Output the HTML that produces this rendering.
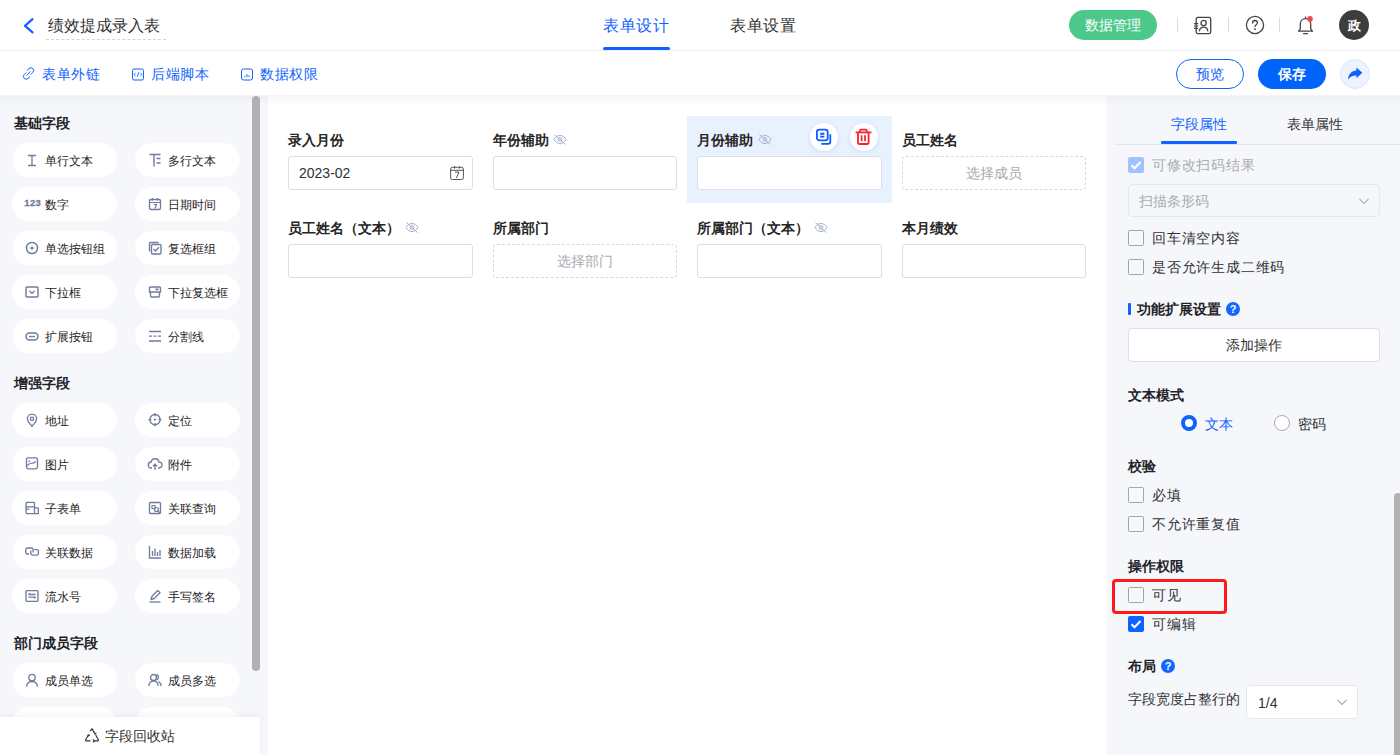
<!DOCTYPE html>
<html><head><meta charset="utf-8">
<style>
*{box-sizing:border-box;margin:0;padding:0}
html,body{width:1400px;height:755px;overflow:hidden;background:#fff;font-family:"Liberation Sans",sans-serif;color:#1f2329}
.abs{position:absolute}
#hdr{position:absolute;left:0;top:0;width:1400px;height:51px;border-bottom:1px solid #eceef2;background:#fff}
#tb{position:absolute;left:0;top:51px;width:1400px;height:45px;background:#fff}
#left{position:absolute;left:0;top:96px;width:268px;height:659px;background:#f5f7fb}
#canvas{position:absolute;left:268px;top:96px;width:838px;height:659px;background:#fff}
#right{position:absolute;left:1106px;top:96px;width:294px;height:659px;background:#f5f7fb}
.shadow{position:absolute;left:0;top:95px;width:1400px;height:10px;background:linear-gradient(to bottom,rgba(0,0,0,0.035),rgba(0,0,0,0))}
.t{position:absolute;white-space:nowrap;line-height:1}
.sec{font-size:14px;font-weight:bold;color:#1f2329}
.pill{position:absolute;width:105px;height:34px;border-radius:17px;background:#fff}
.pill .ic{position:absolute;left:13px;top:10px;width:14px;height:14px;overflow:visible}
.pill span{position:absolute;left:33px;top:12px;font-size:12px;line-height:12px;color:#1f2329;white-space:nowrap}
.lbl{position:absolute;font-size:14px;font-weight:bold;color:#262626;line-height:14px;white-space:nowrap}
.inp{position:absolute;width:185px;height:34px;border:1px solid #dedede;border-radius:3px;background:#fff}
.dash{position:absolute;width:185px;height:34px;border:1px dashed #d9d9d9;border-radius:4px;background:#fff;color:#a8abb2;font-size:14px;text-align:center;line-height:32px}
.cb{position:absolute;width:16px;height:16px;border:1px solid #9fa5b8;border-radius:1.5px;background:#f7f8fb}
.cbt{position:absolute;font-size:14px;line-height:14px;color:#1f2329;white-space:nowrap}
</style></head><body>
<div id="hdr">
<svg class="abs" style="left:22px;top:17px" width="13" height="17" viewBox="0 0 13 17"><path d="M10.5 2.2 L3 8.8 L10.5 15.4" fill="none" stroke="#0f62fe" stroke-width="2.2" stroke-linecap="round" stroke-linejoin="round"/></svg>
<div class="t" style="left:48px;top:18px;font-size:16px;color:#333">绩效提成录入表</div>
<div class="abs" style="left:46px;top:39px;width:120px;border-top:1px dashed #d4d4d4"></div>
<div class="t" style="left:603px;top:18px;font-size:16px;color:#0f62fe;letter-spacing:0.7px">表单设计</div>
<div class="abs" style="left:603px;top:47px;width:67px;height:3px;border-radius:1.5px;background:#0f62fe"></div>
<div class="t" style="left:730px;top:18px;font-size:16px;color:#333;letter-spacing:0.7px">表单设置</div>
<div class="abs" style="left:1069px;top:10px;width:88px;height:30px;border-radius:15px;background:#4cc88a;color:#fff;font-size:14px;line-height:30px;text-align:center">数据管理</div>
<div class="abs" style="left:1177px;top:17px;width:1px;height:15px;background:#dcdcdc"></div>
<div class="abs" style="left:1228px;top:17px;width:1px;height:15px;background:#dcdcdc"></div>
<div class="abs" style="left:1279px;top:17px;width:1px;height:15px;background:#dcdcdc"></div>
<svg class="abs" style="left:1193px;top:16px" width="20" height="20" viewBox="0 0 20 20"><rect x="3.2" y="1.3" width="14.5" height="16.3" rx="1.6" fill="none" stroke="#444" stroke-width="1.3"/><path d="M1 7.6h4.2M1 10h4.2M1 12.4h4.2" stroke="#444" stroke-width="1.1"/><circle cx="10.6" cy="7" r="2.6" fill="none" stroke="#444" stroke-width="1.3"/><path d="M6.3 15.3c.4-2.7 2.1-4.1 4.3-4.1s3.9 1.4 4.3 4.1" fill="none" stroke="#444" stroke-width="1.3"/></svg>
<svg class="abs" style="left:1245px;top:15px" width="20" height="20" viewBox="0 0 20 20"><circle cx="10" cy="10" r="8.6" fill="none" stroke="#444" stroke-width="1.3"/><path d="M7.6 8c0-1.5 1.1-2.5 2.4-2.5s2.4.9 2.4 2.3c0 1.8-2.4 1.9-2.4 3.7" fill="none" stroke="#444" stroke-width="1.3" stroke-linecap="round"/><circle cx="10" cy="14.2" r=".9" fill="#444"/></svg>
<svg class="abs" style="left:1296px;top:14px" width="20" height="22" viewBox="0 0 20 22"><path d="M2.6 17.2h13.8l-1.7-2.3V9.8c0-2.9-2.2-5.2-5.2-5.2S4.3 6.9 4.3 9.8v5.1z" fill="none" stroke="#444" stroke-width="1.3" stroke-linejoin="round"/><path d="M7.6 19.6h3.8" stroke="#444" stroke-width="1.4" stroke-linecap="round"/><path d="M9.5 2.5v2" stroke="#444" stroke-width="1.2"/><circle cx="14" cy="4.9" r="2.8" fill="#f04848"/></svg>
<div class="abs" style="left:1339px;top:10px;width:30px;height:30px;border-radius:15px;background:#3d3d3d;color:#fff;font-size:13px;line-height:31px;text-align:center;font-weight:bold">政</div>
</div>
<div id="tb">
<svg class="abs" style="left:22px;top:16px" width="13" height="13" viewBox="0 0 13 13"><path d="M5.2 3.2 L7 1.6 a2.6 2.6 0 0 1 3.8 3.8 L9 7.2" fill="none" stroke="#0f62fe" stroke-width="1" stroke-linecap="round"/><path d="M7.8 9.8 L6 11.4 a2.6 2.6 0 0 1 -3.8 -3.8 L4 5.8" fill="none" stroke="#0f62fe" stroke-width="1" stroke-linecap="round"/><path d="M4.8 8.2 L8.2 4.8" stroke="#0f62fe" stroke-width="1" stroke-linecap="round"/></svg>
<div class="t" style="left:42px;top:16px;font-size:14px;color:#0f62fe;letter-spacing:0.5px">表单外链</div>
<svg class="abs" style="left:131px;top:17px" width="13" height="13" viewBox="0 0 13 13"><rect x="1.5" y="1" width="11" height="11" rx="1.5" fill="none" stroke="#0f62fe" stroke-width="1"/><path d="M4.6 4.8L3.2 6.5L4.6 8.2M9.4 4.8L10.8 6.5L9.4 8.2M7.8 4.2L6.2 8.8" fill="none" stroke="#0f62fe" stroke-width="0.9"/></svg>
<div class="t" style="left:151px;top:16px;font-size:14px;color:#0f62fe;letter-spacing:0.5px">后端脚本</div>
<svg class="abs" style="left:240px;top:17px" width="14" height="13" viewBox="0 0 14 13"><rect x="1.5" y="1" width="11" height="11" rx="2" fill="none" stroke="#0f62fe" stroke-width="1"/><path d="M4.9 9.3V7.6M7 9.3V6M9.1 9.3V7.2" stroke="#0f62fe" stroke-width="0.9"/></svg>
<div class="t" style="left:260px;top:16px;font-size:14px;color:#0f62fe;letter-spacing:0.5px">数据权限</div>
<div class="abs" style="left:1176px;top:8px;width:68px;height:30px;border:1px solid #0f62fe;border-radius:15px;color:#0f62fe;font-size:14px;line-height:28px;text-align:center">预览</div>
<div class="abs" style="left:1258px;top:8px;width:68px;height:30px;border-radius:15px;background:#0064fa;color:#fff;font-size:14px;font-weight:bold;line-height:30px;text-align:center">保存</div>
<div class="abs" style="left:1340px;top:8px;width:30px;height:30px;border-radius:15px;background:#eef4ff;border:1px solid #dbe6fb"></div>
<svg class="abs" style="left:1347px;top:15px" width="16" height="15" viewBox="0 0 16 15"><path d="M9.4 4.4C4.6 4.8 1.3 8 1 13.8C3 10.6 5.5 9.4 9.4 9.4V12.2L15.4 6.8L9.4 1.4Z" fill="#0f62fe"/></svg>
</div>
<div id="left">
<div class="t sec" style="left:14px;top:20px">基础字段</div>
<div class="pill" style="left:12px;top:47px"><svg class="ic" width="14" height="14" viewBox="0 0 14 14"><path d="M3 2.5h8M3 12.5h8M7 2.5v10" stroke="#6f7c9c" stroke-width="1.29" fill="none"/></svg><span>单行文本</span></div>
<div class="pill" style="left:135px;top:47px"><svg class="ic" width="14" height="14" viewBox="0 0 14 14"><path d="M1.5 1.5h11M6 1.5v12M8.5 5.5h4M8.5 10h4" stroke="#6f7c9c" stroke-width="1.46" fill="none"/></svg><span>多行文本</span></div>
<div class="pill" style="left:12px;top:91px"><svg class="ic" width="14" height="14" viewBox="0 0 14 14"><text x="-0.8" y="9.4" style="font:bold 9.5px 'Liberation Sans',sans-serif;letter-spacing:0.4px" fill="#6f7c9c" stroke="#6f7c9c" stroke-width="0.28">123</text></svg><span>数字</span></div>
<div class="pill" style="left:135px;top:91px"><svg class="ic" width="14" height="14" viewBox="0 0 14 14"><rect x="1.5" y="2.5" width="11" height="10" rx="1.5" fill="none" stroke="#6f7c9c" stroke-width="1.34"/><path d="M1.5 5.5h11M4.5 1v2.5M9.5 1v2.5M5.5 7.5h3l-1.5 4" stroke="#6f7c9c" stroke-width="1.23" fill="none"/></svg><span>日期时间</span></div>
<div class="pill" style="left:12px;top:135px"><svg class="ic" width="14" height="14" viewBox="0 0 14 14"><circle cx="7" cy="7" r="5.6" fill="none" stroke="#6f7c9c" stroke-width="1.46"/><circle cx="7" cy="7" r="1.6" fill="#6f7c9c"/></svg><span>单选按钮组</span></div>
<div class="pill" style="left:135px;top:135px"><svg class="ic" width="14" height="14" viewBox="0 0 14 14"><path d="M1.5 10.5V2.5a1 1 0 0 1 1-1h8" stroke="#6f7c9c" stroke-width="1.34" fill="none"/><rect x="3.5" y="3.5" width="9.5" height="9.5" rx="1" fill="none" stroke="#6f7c9c" stroke-width="1.34"/><path d="M5.5 8l2 2 3.5-3.8" stroke="#6f7c9c" stroke-width="1.34" fill="none"/></svg><span>复选框组</span></div>
<div class="pill" style="left:12px;top:179px"><svg class="ic" width="14" height="14" viewBox="0 0 14 14"><rect x="1" y="2" width="12" height="10" rx="1" fill="none" stroke="#6f7c9c" stroke-width="1.46"/><path d="M4.5 6l2.5 2.3 2.5-2.3" stroke="#6f7c9c" stroke-width="1.34" fill="none"/></svg><span>下拉框</span></div>
<div class="pill" style="left:135px;top:179px"><svg class="ic" width="14" height="14" viewBox="0 0 14 14"><path d="M1.5 7V3a1 1 0 0 1 1-1h9a1 1 0 0 1 1 1v4zM2.5 7v4a1 1 0 0 0 1 1h7a1 1 0 0 0 1-1V7" stroke="#6f7c9c" stroke-width="1.34" fill="none"/><path d="M7.5 3.5l1.5 1.5 1.5-1.5" stroke="#6f7c9c" stroke-width="1.23" fill="none"/></svg><span>下拉复选框</span></div>
<div class="pill" style="left:12px;top:223px"><svg class="ic" width="14" height="14" viewBox="0 0 14 14"><rect x="1" y="4" width="12" height="7" rx="3.5" fill="none" stroke="#6f7c9c" stroke-width="1.46"/><path d="M4 7.5h6" stroke="#6f7c9c" stroke-width="1.34"/></svg><span>扩展按钮</span></div>
<div class="pill" style="left:135px;top:223px"><svg class="ic" width="14" height="14" viewBox="0 0 14 14"><path d="M1 2.5h12M1 12h12" stroke="#6f7c9c" stroke-width="1.34"/><path d="M1 7.2h3M5.5 7.2h3M10 7.2h3" stroke="#6f7c9c" stroke-width="1.34"/></svg><span>分割线</span></div>
<div class="t sec" style="left:14px;top:280px">增强字段</div>
<div class="pill" style="left:12px;top:307px"><svg class="ic" width="14" height="14" viewBox="0 0 14 14"><path d="M7 13.2c-2.8-3-4.6-5.3-4.6-7.5a4.6 4.6 0 0 1 9.2 0c0 2.2-1.8 4.5-4.6 7.5z" fill="none" stroke="#6f7c9c" stroke-width="1.34"/><circle cx="7" cy="5.8" r="1.7" fill="none" stroke="#6f7c9c" stroke-width="1.34"/></svg><span>地址</span></div>
<div class="pill" style="left:135px;top:307px"><svg class="ic" width="14" height="14" viewBox="0 0 14 14"><circle cx="7" cy="6.6" r="5.1" fill="none" stroke="#6f7c9c" stroke-width="1.35"/><circle cx="7" cy="6.6" r="1.1" fill="#6f7c9c"/><path d="M7 0.2v3M7 10v3.2M0.4 6.6h3M10.6 6.6h3" stroke="#6f7c9c" stroke-width="1.35"/></svg><span>定位</span></div>
<div class="pill" style="left:12px;top:351px"><svg class="ic" width="14" height="14" viewBox="0 0 14 14"><rect x="1.5" y="0.9" width="11" height="11" rx="1.8" fill="none" stroke="#6f7c9c" stroke-width="1.35"/><circle cx="4.3" cy="4.3" r="0.9" fill="#6f7c9c"/><path d="M1.8 9.2c1.2-2 2.2-2.6 4-2.7 2-.1 3.6-.6 5-2" fill="none" stroke="#6f7c9c" stroke-width="1.2"/></svg><span>图片</span></div>
<div class="pill" style="left:135px;top:351px"><svg class="ic" width="14" height="14" viewBox="0 0 14 14"><path d="M4 11H3.5a3 3 0 0 1-.4-6A4 4 0 0 1 11 5.2a2.9 2.9 0 0 1 .2 5.8H10" fill="none" stroke="#6f7c9c" stroke-width="1.34"/><path d="M7 13V7.5M5 9.3l2-2 2 2" stroke="#6f7c9c" stroke-width="1.34" fill="none"/></svg><span>附件</span></div>
<div class="pill" style="left:12px;top:395px"><svg class="ic" width="14" height="14" viewBox="0 0 14 14"><path d="M2 1.3h6.6a.9.9 0 0 1 .9.9v10.5H2a.9.9 0 0 1-.9-.9V2.2a.9.9 0 0 1 .9-.9zM1.1 5.8h8.4M1.8 8.2h2.6M9.5 6.9h3.2a.6.6 0 0 1 .6.6v5.2H9.5" fill="none" stroke="#6f7c9c" stroke-width="1.3"/></svg><span>子表单</span></div>
<div class="pill" style="left:135px;top:395px"><svg class="ic" width="14" height="14" viewBox="0 0 14 14"><rect x="1.5" y="1.5" width="11" height="11" rx="1" fill="none" stroke="#6f7c9c" stroke-width="1.34"/><path d="M4 4.5h3v3H4z" stroke="#6f7c9c" stroke-width="1.12" fill="none"/><circle cx="8.5" cy="8.5" r="2" fill="none" stroke="#6f7c9c" stroke-width="1.23"/><path d="M10 10l2 2" stroke="#6f7c9c" stroke-width="1.23"/></svg><span>关联查询</span></div>
<div class="pill" style="left:12px;top:439px"><svg class="ic" width="14" height="14" viewBox="0 0 14 14"><path d="M4 8.95H2.5a1.75 1.75 0 0 1-1.75-1.75V4.7A1.75 1.75 0 0 1 2.5 2.95H6.4A1.75 1.75 0 0 1 8.15 4.7V7.6M5.85 5.6V8.3a1.75 1.75 0 0 0 1.75 1.75H11.7a1.75 1.75 0 0 0 1.75-1.75V6.3A1.75 1.75 0 0 0 11.7 4.55H9.2" fill="none" stroke="#6f7c9c" stroke-width="1.35"/></svg><span>关联数据</span></div>
<div class="pill" style="left:135px;top:439px"><svg class="ic" width="14" height="14" viewBox="0 0 14 14"><path d="M1.5 1v12h11.5M4.5 6v5M7 3.5v7.5M9.5 7v4M12 5v6" stroke="#6f7c9c" stroke-width="1.34" fill="none"/></svg><span>数据加载</span></div>
<div class="pill" style="left:12px;top:483px"><svg class="ic" width="14" height="14" viewBox="0 0 14 14"><rect x="1" y="1.6" width="12" height="10.8" rx="0.8" fill="none" stroke="#6f7c9c" stroke-width="1.35"/><path d="M3.4 5.5h7.2M5 4.2L3.4 5.5M3.4 8.2h7.2M9 9.6l1.6-1.4" fill="none" stroke="#6f7c9c" stroke-width="1.3"/></svg><span>流水号</span></div>
<div class="pill" style="left:135px;top:483px"><svg class="ic" width="14" height="14" viewBox="0 0 14 14"><path d="M3 10.5l1-3.2 5.8-5.8 2.2 2.2-5.8 5.8z" stroke="#6f7c9c" stroke-width="1.34" fill="none" stroke-linejoin="round"/><path d="M1.5 13h11" stroke="#6f7c9c" stroke-width="1.34"/></svg><span>手写签名</span></div>
<div class="t sec" style="left:14px;top:540px">部门成员字段</div>
<div class="pill" style="left:12px;top:567px"><svg class="ic" width="14" height="14" viewBox="0 0 14 14"><circle cx="7" cy="4.5" r="3.2" fill="none" stroke="#6f7c9c" stroke-width="1.34"/><path d="M1.5 13.5c.4-3.3 2.5-5 5.5-5s5.1 1.7 5.5 5" fill="none" stroke="#6f7c9c" stroke-width="1.34"/></svg><span>成员单选</span></div>
<div class="pill" style="left:135px;top:567px"><svg class="ic" width="14" height="14" viewBox="0 0 14 14"><circle cx="5.5" cy="4.5" r="3" fill="none" stroke="#6f7c9c" stroke-width="1.34"/><path d="M0.8 13c.4-3.2 2.2-4.8 4.7-4.8s4.3 1.6 4.7 4.8M8.5 1.5a3 3 0 0 1 0 5.6M10.5 8.6c1.6.7 2.5 2.2 2.8 4.4" fill="none" stroke="#6f7c9c" stroke-width="1.34"/></svg><span>成员多选</span></div>
<div class="pill" style="left:12px;top:611px"><svg class="ic" width="14" height="14" viewBox="0 0 14 14"><circle cx="7" cy="4.5" r="3.2" fill="none" stroke="#6f7c9c" stroke-width="1.34"/><path d="M1.5 13.5c.4-3.3 2.5-5 5.5-5s5.1 1.7 5.5 5" fill="none" stroke="#6f7c9c" stroke-width="1.34"/></svg><span>部门单选</span></div>
<div class="pill" style="left:135px;top:611px"><svg class="ic" width="14" height="14" viewBox="0 0 14 14"><circle cx="5.5" cy="4.5" r="3" fill="none" stroke="#6f7c9c" stroke-width="1.34"/><path d="M0.8 13c.4-3.2 2.2-4.8 4.7-4.8s4.3 1.6 4.7 4.8M8.5 1.5a3 3 0 0 1 0 5.6M10.5 8.6c1.6.7 2.5 2.2 2.8 4.4" fill="none" stroke="#6f7c9c" stroke-width="1.34"/></svg><span>部门多选</span></div>
<div class="abs" style="left:252px;top:0px;width:8px;height:575px;border-radius:4px;background:#b2b2b2"></div>
<div class="abs" style="left:0;top:621px;width:260px;height:38px;background:#fff;box-shadow:0 -2px 6px rgba(0,0,0,0.05)"></div>
<svg class="abs" style="left:84px;top:632px" width="16" height="15" viewBox="0 0 16 15"><path d="M6.2 3.2L8 0.8l2.2 3.6M11.5 6.5l2.8 5.2a.8.8 0 0 1-.7 1.2H10M6.5 12.9H2.4a.8.8 0 0 1-.7-1.2L4.2 7.2" fill="none" stroke="#333" stroke-width="1.2"/><path d="M9 11.3l1.2 1.6-1.2 1.5M4 8.8l.2-1.9 1.8.5M10 3.9l.6 1.8 1.8-.6" fill="none" stroke="#333" stroke-width="1.1"/></svg>
<div class="t" style="left:105px;top:633px;font-size:14px;color:#333">字段回收站</div>
</div>
<div id="canvas">
<div class="abs" style="left:419px;top:20px;width:205px;height:87px;background:#e8f1fe"></div>
<div class="lbl" style="left:20px;top:37px">录入月份</div>
<div class="lbl" style="left:225px;top:37px">年份辅助</div>
<svg class="abs" style="left:285px;top:38px" width="14" height="11" viewBox="0 0 14 11"><path d="M1 5.5C2.6 2.8 4.6 1.5 7 1.5s4.4 1.3 6 4c-1.6 2.7-3.6 4-6 4S2.6 8.2 1 5.5z" fill="none" stroke="#a3aec8" stroke-width="1"/><circle cx="7" cy="5.5" r="1.8" fill="none" stroke="#a3aec8" stroke-width="1"/><path d="M1.5 0.5L12.5 10.5" stroke="#a3aec8" stroke-width="1"/></svg>
<div class="lbl" style="left:429px;top:37px">月份辅助</div>
<svg class="abs" style="left:490px;top:38px" width="14" height="11" viewBox="0 0 14 11"><path d="M1 5.5C2.6 2.8 4.6 1.5 7 1.5s4.4 1.3 6 4c-1.6 2.7-3.6 4-6 4S2.6 8.2 1 5.5z" fill="none" stroke="#a3aec8" stroke-width="1"/><circle cx="7" cy="5.5" r="1.8" fill="none" stroke="#a3aec8" stroke-width="1"/><path d="M1.5 0.5L12.5 10.5" stroke="#a3aec8" stroke-width="1"/></svg>
<div class="lbl" style="left:634px;top:37px">员工姓名</div>
<div class="lbl" style="left:20px;top:125px">员工姓名（文本）</div>
<svg class="abs" style="left:137px;top:126px" width="14" height="11" viewBox="0 0 14 11"><path d="M1 5.5C2.6 2.8 4.6 1.5 7 1.5s4.4 1.3 6 4c-1.6 2.7-3.6 4-6 4S2.6 8.2 1 5.5z" fill="none" stroke="#a3aec8" stroke-width="1"/><circle cx="7" cy="5.5" r="1.8" fill="none" stroke="#a3aec8" stroke-width="1"/><path d="M1.5 0.5L12.5 10.5" stroke="#a3aec8" stroke-width="1"/></svg>
<div class="lbl" style="left:225px;top:125px">所属部门</div>
<div class="lbl" style="left:429px;top:125px">所属部门（文本）</div>
<svg class="abs" style="left:546px;top:126px" width="14" height="11" viewBox="0 0 14 11"><path d="M1 5.5C2.6 2.8 4.6 1.5 7 1.5s4.4 1.3 6 4c-1.6 2.7-3.6 4-6 4S2.6 8.2 1 5.5z" fill="none" stroke="#a3aec8" stroke-width="1"/><circle cx="7" cy="5.5" r="1.8" fill="none" stroke="#a3aec8" stroke-width="1"/><path d="M1.5 0.5L12.5 10.5" stroke="#a3aec8" stroke-width="1"/></svg>
<div class="lbl" style="left:634px;top:125px">本月绩效</div>
<div class="inp" style="left:20px;top:60px;width:185px"></div>
<div class="inp" style="left:225px;top:60px;width:184px"></div>
<div class="inp" style="left:429px;top:60px;width:185px"></div>
<div class="dash" style="left:634px;top:60px;width:184px">选择成员</div>
<div class="inp" style="left:20px;top:148px;width:185px"></div>
<div class="dash" style="left:225px;top:148px;width:184px">选择部门</div>
<div class="inp" style="left:429px;top:148px;width:185px"></div>
<div class="inp" style="left:634px;top:148px;width:184px"></div>
<div class="t" style="left:31px;top:70px;font-size:14px;color:#303133">2023-02</div>
<svg class="abs" style="left:181px;top:69px" width="16" height="16" viewBox="0 0 16 16"><rect x="1.6" y="2.3" width="12.8" height="12.2" rx="1.8" fill="none" stroke="#555" stroke-width="1"/><path d="M1.6 5.3h12.8M5.5 1v2.6M10.7 1v2.6" stroke="#555" stroke-width="1"/><path d="M6 7.1h4l-2.6 5.9" stroke="#555" stroke-width="1" fill="none"/></svg>
<div class="abs" style="left:542px;top:27px;width:28px;height:28px;border-radius:14px;background:#fff;box-shadow:0 1px 4px rgba(0,70,200,0.12)"></div>
<div class="abs" style="left:582px;top:27px;width:28px;height:28px;border-radius:14px;background:#fff;box-shadow:0 1px 4px rgba(0,70,200,0.12)"></div>
<svg class="abs" style="left:547px;top:32px" width="18" height="18" viewBox="0 0 18 18"><rect x="1.9" y="1.6" width="10.8" height="10.8" rx="2.4" fill="none" stroke="#0a5cff" stroke-width="1.8"/><path d="M5.2 5.8h4.2M5.2 8.6h4.2" stroke="#0a5cff" stroke-width="1.9"/><path d="M15.3 6.2v7.6a2 2 0 0 1-2 2H6.3" fill="none" stroke="#0a5cff" stroke-width="1.8"/></svg>
<svg class="abs" style="left:587px;top:32px" width="17" height="18" viewBox="0 0 17 18"><path d="M0.6 4.4H16.4" stroke="#f5222d" stroke-width="1.8"/><path d="M4.9 4.2V2.9a1.2 1.2 0 0 1 1.2-1.2h4.6a1.2 1.2 0 0 1 1.2 1.2v1.3" fill="none" stroke="#f5222d" stroke-width="1.7"/><path d="M3 4.6V14.4a1.6 1.6 0 0 0 1.6 1.6H12a1.6 1.6 0 0 0 1.6-1.6V4.6" fill="none" stroke="#f5222d" stroke-width="1.8"/><path d="M6.6 7.2v6M10 7.2v6" stroke="#f5222d" stroke-width="1.7"/></svg>
</div>
<div id="right">
<div class="t" style="left:65px;top:21px;font-size:14px;color:#0f62fe">字段属性</div>
<div class="t" style="left:181px;top:21px;font-size:14px;color:#333">表单属性</div>
<div class="abs" style="left:55px;top:45px;width:76px;height:3px;border-radius:1px;background:#0f62fe"></div>
<div class="abs" style="left:8px;top:48px;width:286px;height:1px;background:#e4e6eb"></div>
<div class="abs" style="left:22px;top:61px;width:16px;height:16px;border-radius:2px;background:#a0c3fd"></div>
<svg class="abs" style="left:22px;top:61px" width="16" height="16" viewBox="0 0 16 16"><path d="M3.5 8.2l3 3 6-6.2" fill="none" stroke="#fff" stroke-width="2"/></svg>
<div class="t" style="left:46px;top:62px;font-size:14px;color:#a8abb2;letter-spacing:0.8px">可修改扫码结果</div>
<div class="abs" style="left:22px;top:88px;width:252px;height:33px;border:1px solid #e4e7ed;border-radius:4px;background:#f5f7fa"></div>
<div class="t" style="left:33px;top:98px;font-size:14px;color:#a8abb2">扫描条形码</div>
<svg class="abs" style="left:252px;top:100px" width="12" height="10" viewBox="0 0 12 10"><path d="M1.5 3l4.5 4.5L10.5 3" fill="none" stroke="#b0b3b9" stroke-width="1.1"/></svg>
<div class="cb" style="left:22px;top:134px"></div>
<div class="t" style="left:46px;top:135px;font-size:14px;color:#303133;letter-spacing:0.8px">回车清空内容</div>
<div class="cb" style="left:22px;top:163px"></div>
<div class="t" style="left:46px;top:164px;font-size:14px;color:#303133;letter-spacing:0.8px">是否允许生成二维码</div>
<div class="abs" style="left:22px;top:207px;width:3px;height:12px;border-radius:1px;background:#0f62fe"></div>
<div class="t" style="left:31px;top:206px;font-size:14px;font-weight:bold;color:#1f2329">功能扩展设置</div>
<div class="abs" style="left:120px;top:206px;width:14px;height:14px;border-radius:7px;background:#1366ff;color:#fff;font-size:11px;font-weight:bold;line-height:14px;text-align:center;font-family:'Liberation Sans',sans-serif">?</div>
<div class="abs" style="left:22px;top:232px;width:252px;height:34px;border:1px solid #dcdfe6;border-radius:4px;background:#fff;color:#303133;font-size:14px;line-height:32px;text-align:center">添加操作</div>
<div class="t" style="left:22px;top:292px;font-size:14px;font-weight:bold;color:#1f2329">文本模式</div>
<div class="abs" style="left:75px;top:319px;width:16px;height:16px;border-radius:8px;border:4.5px solid #0f62fe;background:#fff"></div>
<div class="t" style="left:99px;top:321px;font-size:14px;color:#0f62fe">文本</div>
<div class="abs" style="left:168px;top:319px;width:16px;height:16px;border-radius:8px;border:1px solid #a8abb2;background:#fff"></div>
<div class="t" style="left:192px;top:321px;font-size:14px;color:#303133">密码</div>
<div class="t" style="left:22px;top:363px;font-size:14px;font-weight:bold;color:#1f2329">校验</div>
<div class="cb" style="left:22px;top:391px"></div>
<div class="t" style="left:46px;top:392px;font-size:14px;color:#303133;letter-spacing:0.8px">必填</div>
<div class="cb" style="left:22px;top:420px"></div>
<div class="t" style="left:46px;top:421px;font-size:14px;color:#303133;letter-spacing:0.8px">不允许重复值</div>
<div class="t" style="left:22px;top:463px;font-size:14px;font-weight:bold;color:#1f2329">操作权限</div>
<div class="cb" style="left:22px;top:491px"></div>
<div class="t" style="left:46px;top:492px;font-size:14px;color:#303133;letter-spacing:0.8px">可见</div>
<div class="abs" style="left:6px;top:483px;width:115px;height:35px;border:3px solid #ff1a1a;border-radius:4px"></div>
<div class="abs" style="left:22px;top:520px;width:16px;height:16px;border-radius:2px;background:#0f62fe"></div>
<svg class="abs" style="left:22px;top:520px" width="16" height="16" viewBox="0 0 16 16"><path d="M3.5 8.2l3 3 6-6.2" fill="none" stroke="#fff" stroke-width="2"/></svg>
<div class="t" style="left:46px;top:521px;font-size:14px;color:#303133;letter-spacing:0.8px">可编辑</div>
<div class="t" style="left:22px;top:563px;font-size:14px;font-weight:bold;color:#1f2329">布局</div>
<div class="abs" style="left:55px;top:563px;width:14px;height:14px;border-radius:7px;background:#1366ff;color:#fff;font-size:11px;font-weight:bold;line-height:14px;text-align:center;font-family:'Liberation Sans',sans-serif">?</div>
<div class="t" style="left:22px;top:596px;font-size:14px;color:#303133">字段宽度占整行的</div>
<div class="abs" style="left:140px;top:589px;width:112px;height:34px;border:1px solid #e4e7ed;border-radius:4px;background:#fff"></div>
<div class="t" style="left:152px;top:600px;font-size:14px;color:#303133">1/4</div>
<svg class="abs" style="left:230px;top:601px" width="12" height="10" viewBox="0 0 12 10"><path d="M1.5 3l4.5 4.5L10.5 3" fill="none" stroke="#a8abb2" stroke-width="1.1"/></svg>
<div class="abs" style="left:288px;top:397px;width:8px;height:300px;border-radius:4px;background:#b2b2b2"></div>
</div>
<div class="shadow"></div>
</body></html>
